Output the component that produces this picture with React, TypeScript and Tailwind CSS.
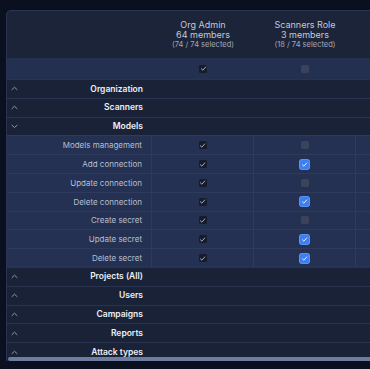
import type { ReactNode } from "react";

type Mark = "dark" | "empty" | "blue" | "none";

type Section = {
  name: string;
  open?: boolean;
  perms?: { label: string; marks: [Mark, Mark, Mark] }[];
};

const sections: Section[] = [
  { name: "Organization" },
  { name: "Scanners" },
  {
    name: "Models",
    open: true,
    perms: [
      { label: "Models management", marks: ["dark", "empty", "none"] },
      { label: "Add connection", marks: ["dark", "blue", "none"] },
      { label: "Update connection", marks: ["dark", "empty", "none"] },
      { label: "Delete connection", marks: ["dark", "blue", "none"] },
      { label: "Create secret", marks: ["dark", "empty", "none"] },
      { label: "Update secret", marks: ["dark", "blue", "none"] },
      { label: "Delete secret", marks: ["dark", "blue", "none"] },
    ],
  },
  { name: "Projects (All)" },
  { name: "Users" },
  { name: "Campaigns" },
  { name: "Reports" },
  { name: "Attack types" },
];

// third column sits past the right edge of the viewport
const roles = [
  { name: "Org Admin", members: 64, selected: 74, select: "dark" as Mark },
  { name: "Scanners Role", members: 3, selected: 18, select: "empty" as Mark },
  { name: "", members: 0, selected: 0, select: "none" as Mark },
];

function Check({ color }: { color: string }) {
  return (
    <svg width="7" height="7" viewBox="0 0 10 10" fill="none">
      <path d="M2 5.4 4.1 7.4 8.2 2.8" stroke={color} strokeWidth="1.4" strokeLinecap="round" strokeLinejoin="round" />
    </svg>
  );
}

function Box({ mark }: { mark: Mark }) {
  if (mark === "none") return null;
  if (mark === "blue")
    return (
      <span className="flex h-[9px] w-[9px] items-center justify-center rounded-[2px] bg-[#3d7ff0] ring-1 ring-[#5b93f5]">
        <Check color="#e8efff" />
      </span>
    );
  if (mark === "dark")
    return (
      <span className="flex h-[8px] w-[8px] items-center justify-center rounded-[1.5px] bg-[#151c2e]">
        <Check color="#aab0bd" />
      </span>
    );
  return <span className="block h-[8px] w-[8px] rounded-[1.5px] bg-[#3a4359]" />;
}

function Chevron({ open }: { open?: boolean }) {
  return (
    <svg width="7" height="5" viewBox="0 0 7 5" fill="none" className="shrink-0">
      <path
        d={open ? "M1 1.2 3.5 3.6 6 1.2" : "M1 3.6 3.5 1.2 6 3.6"}
        stroke="#8e97ab"
        strokeWidth="1"
        strokeLinecap="round"
        strokeLinejoin="round"
      />
    </svg>
  );
}

function Cell({ children, className = "" }: { children?: ReactNode; className?: string }) {
  return <div className={`flex w-[102px] shrink-0 items-center justify-center ${className}`}>{children}</div>;
}

export default function App() {
  return (
    <div className="h-[369px] w-[370px] overflow-hidden bg-[#0a1020] pl-[6px] pt-[10px] font-['Inter',sans-serif]">
      <div className="relative w-[460px] overflow-hidden rounded-tl-[5px] border-l border-t border-[#2a3452] bg-[#1b2439]">
        {/* header */}
        <div className="flex h-[47px]">
          <div className="w-[145px] shrink-0" />
          {roles.map((r, i) => (
            <Cell key={i} className="flex-col text-center">
              {r.name && (
                <>
                  <div className="text-[9px] leading-[9.5px] text-[#c3c9d6]">{r.name}</div>
                  <div className="text-[9px] leading-[9.5px] text-[#c3c9d6]">{r.members} members</div>
                  <div className="mt-[0.5px] text-[7.5px] leading-[9px] text-[#a2a9b9]">
                    ({r.selected} / 74 selected)
                  </div>
                </>
              )}
            </Cell>
          ))}
        </div>

        {/* select all */}
        <div className="flex h-[21px] bg-[#233050]">
          <div className="w-[145px] shrink-0" />
          {roles.map((r, i) => (
            <Cell key={i}>
              <Box mark={r.select} />
            </Cell>
          ))}
        </div>

        {sections.map((s) => (
          <div key={s.name}>
            <div className="flex h-[18.8px] items-center border-t border-[#2a3450] bg-[#1a2238] pl-[4px]">
              <div className="flex w-[141px] shrink-0 items-center pr-[9px]">
                <Chevron open={s.open} />
                <span className="ml-auto text-[8.5px] font-semibold text-[#eef0f5]">{s.name}</span>
              </div>
            </div>
            {s.perms?.map((p) => (
              <div key={p.label} className="flex h-[18.8px] border-t border-[#2f3b5c] bg-[#243152]">
                <div className="flex w-[145px] shrink-0 items-center justify-end border-r border-[#2f3b5c] pr-[9px] text-[8px] text-[#b7bfcf]">
                  {p.label}
                </div>
                {p.marks.map((m, i) => (
                  <Cell key={i} className="border-r border-[#2f3b5c]">
                    <Box mark={m} />
                  </Cell>
                ))}
              </div>
            ))}
          </div>
        ))}

        <div className="absolute bottom-0 left-[1px] right-0 h-[4px] rounded-full bg-[#6e7d9e]" />
      </div>
    </div>
  );
}
